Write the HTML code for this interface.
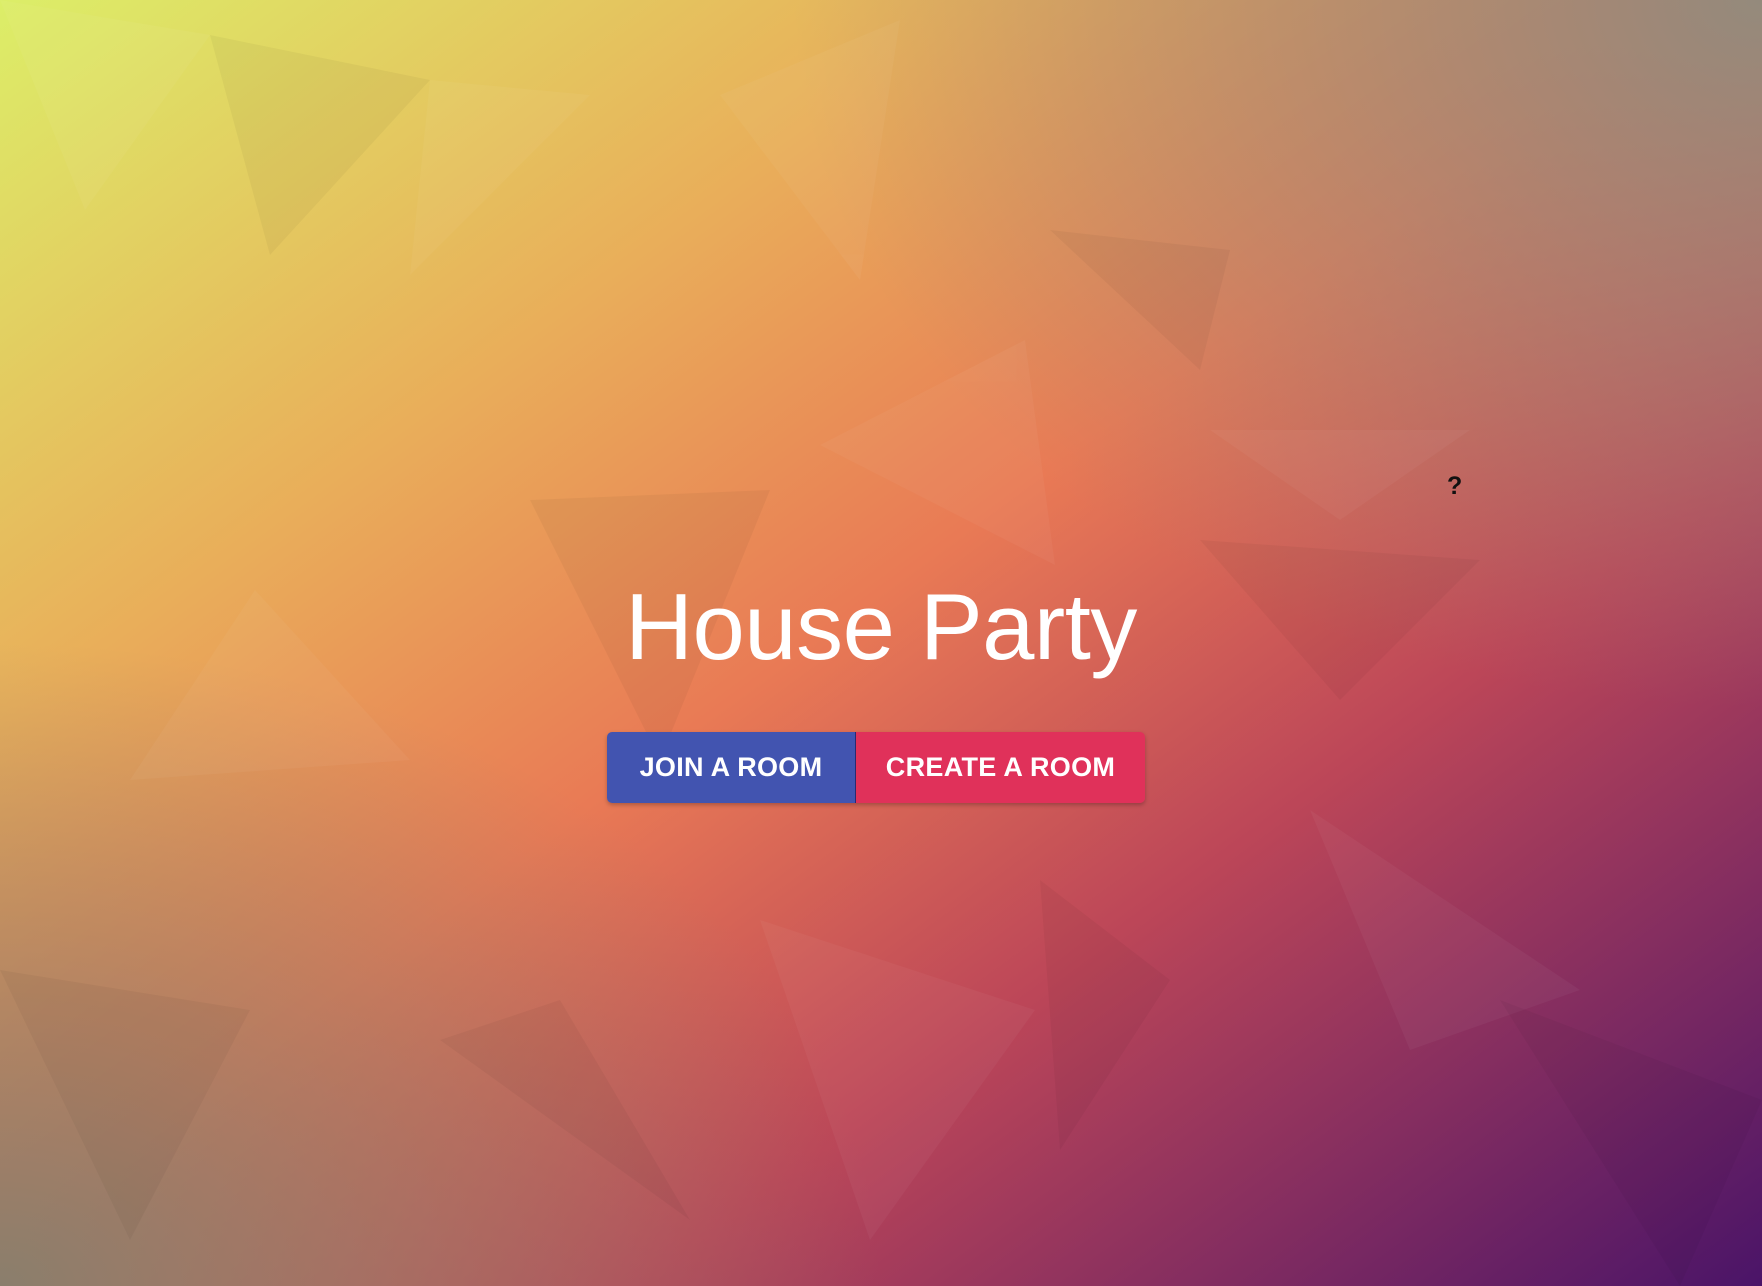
<!DOCTYPE html>
<html><head><meta charset="utf-8"><style>
html,body{margin:0;padding:0;width:1762px;height:1286px;overflow:hidden;font-family:"Liberation Sans",sans-serif}
body{position:relative;background:#d2704f}
#bg{position:absolute;inset:0}
h1{position:absolute;left:0;width:1762px;top:572px;margin:0;text-align:center;color:#fff;font-weight:400;font-size:94px;line-height:110px;letter-spacing:-0.5px}
.btns{position:absolute;left:607px;top:732px;height:71px;display:flex;border-radius:5px;overflow:hidden;box-shadow:0 2px 4px rgba(0,0,0,.25)}
.b{height:71px;display:flex;align-items:center;justify-content:center;color:#fff;font-size:27px;font-weight:bold;letter-spacing:0.3px}
.j{width:248px;background:#4254b0;border-right:1px solid #2a2a70}
.c{width:289px;background:#e0315a}
.q{position:absolute;left:1447px;top:472px;font-size:25px;font-weight:bold;color:#111}
</style></head><body>
<svg id="bg" width="1762" height="1286" viewBox="0 0 1762 1286">
<defs>
<linearGradient id="g1" x1="0" y1="0" x2="1" y2="1">
<stop offset="0" stop-color="#dcee68"/>
<stop offset="0.28" stop-color="#e9ae5a"/>
<stop offset="0.48" stop-color="#e97a55"/>
<stop offset="0.68" stop-color="#bc4658"/>
<stop offset="1" stop-color="#4a1468"/>
</linearGradient>
<radialGradient id="tr" cx="1" cy="0" r="0.55"><stop offset="0" stop-color="#948a7c"/><stop offset="1" stop-color="#948a7c" stop-opacity="0"/></radialGradient>
<radialGradient id="bl" cx="0" cy="1" r="0.5"><stop offset="0" stop-color="#8a7e6c"/><stop offset="1" stop-color="#8a7e6c" stop-opacity="0"/></radialGradient>
</defs>
<rect width="1762" height="1286" fill="url(#g1)"/>
<rect width="1762" height="1286" fill="url(#tr)"/>
<rect width="1762" height="1286" fill="url(#bl)"/>
<g opacity="0.04" fill="#fff">
<polygon points="0,0 210,35 85,210"/><polygon points="430,80 590,95 410,275"/><polygon points="720,95 860,280 900,20"/>
<polygon points="820,445 1055,565 1025,340"/><polygon points="1210,430 1340,520 1470,430"/><polygon points="255,590 410,760 130,780"/>
<polygon points="760,920 1035,1010 870,1240"/><polygon points="1310,810 1410,1050 1580,990"/>
</g>
<g opacity="0.04" fill="#000">
<polygon points="210,35 430,80 270,255"/><polygon points="1050,230 1230,250 1200,370"/><polygon points="530,500 770,490 660,760"/>
<polygon points="1200,540 1480,560 1340,700"/><polygon points="0,970 250,1010 130,1240"/><polygon points="1500,1000 1762,1100 1680,1286"/>
<polygon points="440,1040 560,1000 690,1220"/><polygon points="1040,880 1170,980 1060,1150"/>
</g>
</svg>
<h1>House Party</h1>
<div class="btns"><div class="b j">JOIN A ROOM</div><div class="b c">CREATE A ROOM</div></div>
<div class="q">?</div>
</body></html>
